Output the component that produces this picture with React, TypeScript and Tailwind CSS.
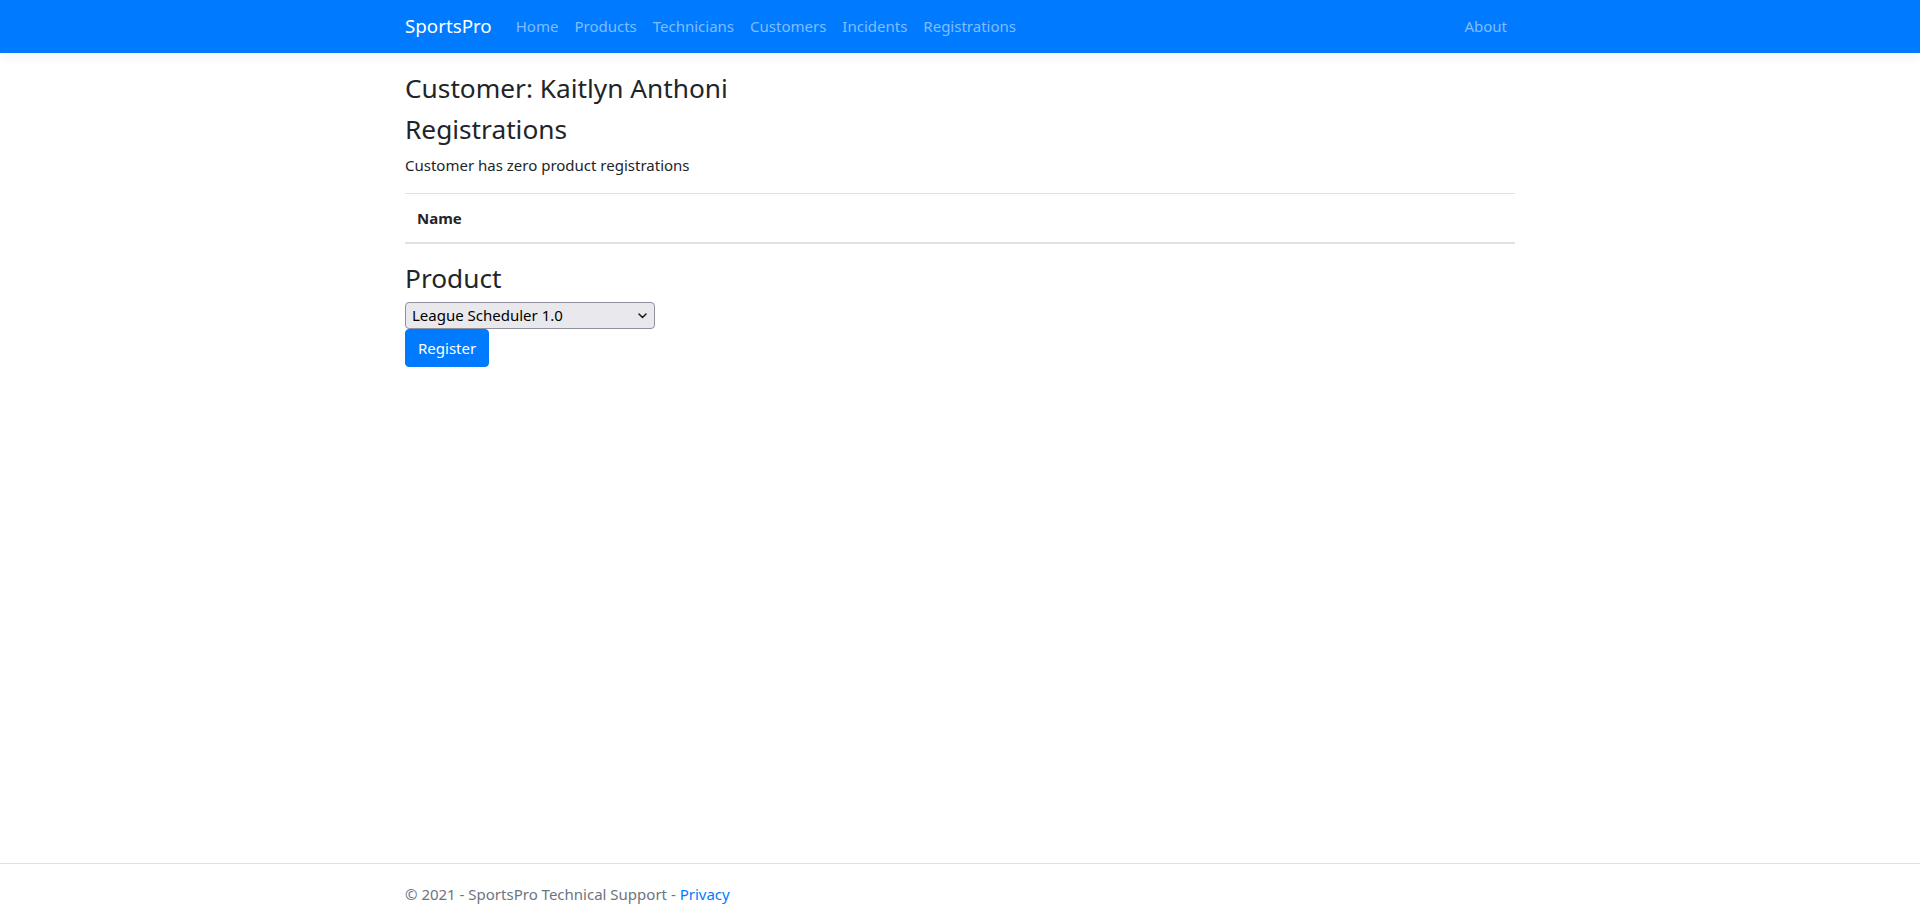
import React from "react";

const font = { fontFamily: '"Noto Sans", "Open Sans", sans-serif' };

export default function App() {
  const links = ["Home", "Products", "Technicians", "Customers", "Incidents", "Registrations"];
  return (
    <div className="min-h-screen flex flex-col bg-white text-[#212529] text-[15px] leading-[24px]" style={font}>
      <nav className="h-[53px] bg-[#007bff] shadow-[0_4px_12px_rgba(0,0,0,0.05)]">
        <div className="w-[1140px] mx-auto px-[15px] h-full flex items-center pb-[2px]">
          <span className="text-[18.75px] text-white mr-[16px] leading-[30px]">SportsPro</span>
          <div className="flex items-center">
            {links.map((l) => (
              <span key={l} className="px-[8px] text-[#80bdff] leading-[24px]">{l}</span>
            ))}
          </div>
          <div className="ml-auto px-[8px] text-[#80bdff]">About</div>
        </div>
      </nav>
      <main className="flex-1">
        <div className="w-[1140px] mx-auto px-[15px] pt-[17px]">
          <h3 className="text-[26.25px] leading-[33.6px] pt-[2px] mb-[6px] font-normal">Customer: Kaitlyn Anthoni</h3>
          <h3 className="text-[26.25px] leading-[33.6px] pt-[1px] mb-[7px] font-normal">Registrations</h3>
          <p className="mb-[16px]">Customer has zero product registrations</p>
          <table className="w-full mb-[16px] border-collapse">
            <thead>
              <tr>
                <th className="text-left font-bold p-[12px] border-t border-[#dee2e6] border-b-2 leading-[24px]">Name</th>
              </tr>
            </thead>
          </table>
          <h3 className="text-[26.25px] leading-[33.6px] pt-[2px] mb-[7px] font-normal">Product</h3>
          <div className="relative w-[250px] h-[27px] -mt-[1px]">
            <select
              defaultValue="1"
              className="appearance-none w-full h-full bg-[#e9e9ed] border border-[#8f8f9d] rounded-[4px] pl-[6px] pr-[24px] text-[15px] leading-[24px] text-black outline-none"
              style={font}
            >
              <option value="1">League Scheduler 1.0</option>
            </select>
            <svg className="absolute right-[8px] top-[11px] pointer-events-none" width="9" height="6" viewBox="0 0 9 6">
              <path d="M1 1 L4.5 4.5 L8 1" fill="none" stroke="#1a1a1a" strokeWidth="1.5" strokeLinecap="round" strokeLinejoin="round" />
            </svg>
          </div>
          <button className="block h-[38px] px-[12px] bg-[#007bff] text-white text-[15px] rounded-[4px] border border-[#007bff] leading-[24px]" style={font}>
            Register
          </button>
        </div>
      </main>
      <footer className="h-[57px] border-t border-[#dee2e6] text-[#6c757d]">
        <div className="w-[1140px] mx-auto px-[15px] leading-[60px]">
          © 2021 - SportsPro Technical Support - <a className="text-[#007bff]">Privacy</a>
        </div>
      </footer>
    </div>
  );
}
